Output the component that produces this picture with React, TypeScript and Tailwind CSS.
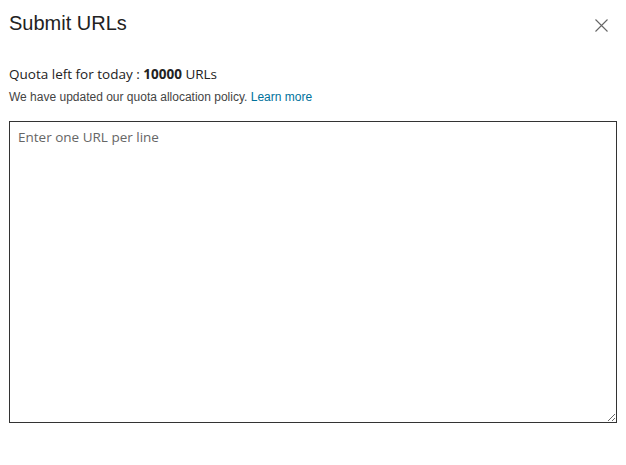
export default function App() {
  return (
    <div className="h-[465px] w-[626px] bg-white">
      <div className="flex items-start justify-between pl-[9px] pr-[18px] pt-[10px]">
        <h1 className="font-['Liberation_Sans',Arial,sans-serif] text-[20px] leading-[26px] text-[#222]">
          Submit URLs
        </h1>
        <button className="mt-[9px] text-[#666]" aria-label="Close">
          <svg width="13" height="13" viewBox="0 0 13 13" fill="none" stroke="currentColor" strokeWidth="1.1">
            <path d="M0.5 0.5L12.5 12.5M12.5 0.5L0.5 12.5" />
          </svg>
        </button>
      </div>

      <div className="mt-[29px] px-[9px]">
        <p className="font-['Open_Sans','Noto_Sans',sans-serif] text-[13.5px] leading-[18px] text-[#222]">
          Quota left for today : <span className="font-bold">10000</span> URLs
        </p>
        <p className="mt-[6px] font-['Liberation_Sans',Arial,sans-serif] text-[12px] leading-[16px] text-[#444]">
          We have updated our quota allocation policy.{' '}
          <a href="#" className="text-[#00729c]">
            Learn more
          </a>
        </p>
        <textarea
          placeholder="Enter one URL per line"
          className="mt-[16px] block h-[302px] w-[608px] resize-y border border-[#333] px-[8px] py-[6px] font-['Open_Sans','Noto_Sans',sans-serif] text-[13.5px] leading-[18px] text-[#222] outline-none placeholder:text-[#666]"
        />
      </div>
    </div>
  )
}
